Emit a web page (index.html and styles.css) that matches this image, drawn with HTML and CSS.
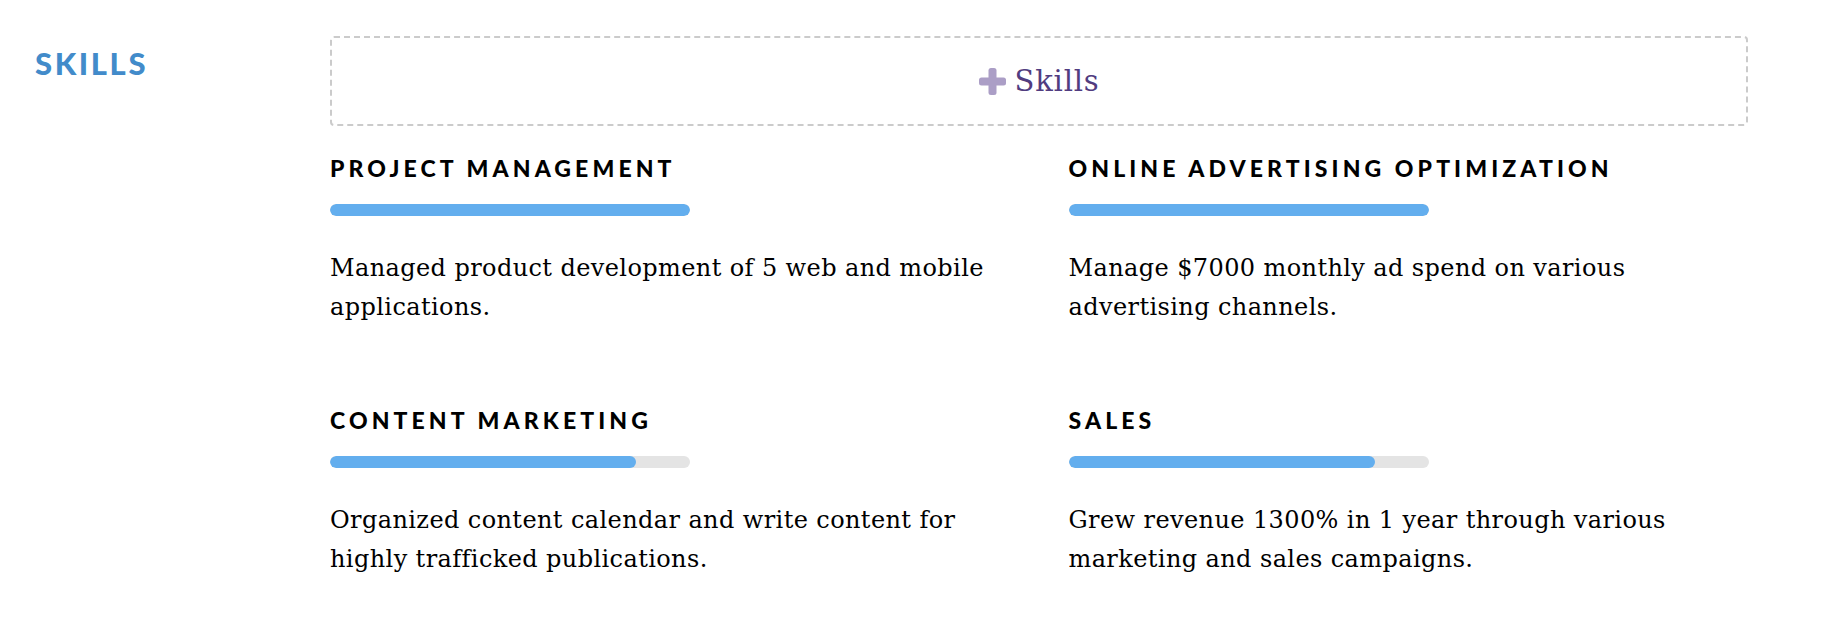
FILE: index.html
```html
<!DOCTYPE html>
<html lang="en">
<head>
<meta charset="utf-8">
<title>Skills</title>
<link rel="stylesheet" href="styles.css">
</head>
<body>
<div class="page">
  <aside class="side">
    <h2 class="section-title">SKILLS</h2>
  </aside>
  <main class="main">
    <button class="add-box" type="button">
      <svg class="plus" width="27" height="27" viewBox="0 0 27 27" aria-hidden="true">
        <rect x="9.5" y="0" width="8" height="27" rx="2.5" fill="#ab9ec6"/>
        <rect x="0" y="9.5" width="27" height="8" rx="2.5" fill="#ab9ec6"/>
      </svg>
      <span class="add-label">Skills</span>
    </button>
    <div class="skills">
      <section class="skill">
        <h3 class="skill-name">PROJECT MANAGEMENT</h3>
        <div class="bar"><div class="fill" style="width:100%"></div></div>
        <p class="skill-desc">Managed product development of 5 web and mobile applications.</p>
      </section>
      <section class="skill">
        <h3 class="skill-name">ONLINE ADVERTISING OPTIMIZATION</h3>
        <div class="bar"><div class="fill" style="width:100%"></div></div>
        <p class="skill-desc">Manage $7000 monthly ad spend on various advertising channels.</p>
      </section>
      <section class="skill">
        <h3 class="skill-name">CONTENT MARKETING</h3>
        <div class="bar"><div class="fill" style="width:85%"></div></div>
        <p class="skill-desc">Organized content calendar and write content for highly trafficked publications.</p>
      </section>
      <section class="skill">
        <h3 class="skill-name">SALES</h3>
        <div class="bar"><div class="fill" style="width:85%"></div></div>
        <p class="skill-desc">Grew revenue 1300% in 1 year through various marketing and sales campaigns.</p>
      </section>
    </div>
  </main>
</div>
</body>
</html>
```

FILE: styles.css
```css
* { box-sizing: border-box; }

html, body {
  margin: 0;
  padding: 0;
  background: #ffffff;
}

body {
  font-family: "DejaVu Serif", "Liberation Serif", serif;
  color: #111111;
}

.page {
  display: flex;
  padding: 36px 94px 0 35px;
}

.side {
  width: 295px;
  flex: none;
}

.section-title {
  margin: 0;
  padding-top: 7px;
  font-family: "Lato", "Liberation Sans", sans-serif;
  font-weight: 900;
  font-size: 31px;
  line-height: 40px;
  letter-spacing: 2.6px;
  color: #428bca;
}

.main {
  flex: 1;
  min-width: 0;
}

.add-box {
  display: flex;
  align-items: center;
  justify-content: center;
  gap: 9px;
  width: 100%;
  height: 90px;
  margin: 0;
  padding: 0;
  background: #ffffff;
  border: 2px dashed #cbcbcb;
  border-radius: 4px;
  font: inherit;
  cursor: pointer;
}

.plus {
  display: block;
  flex: none;
}

.add-label {
  font-family: "DejaVu Serif", "Liberation Serif", serif;
  font-size: 29px;
  line-height: 34px;
  letter-spacing: 0.8px;
  color: #513c80;
}

.skills {
  display: grid;
  grid-template-columns: 1fr 1fr;
  column-gap: 59px;
  row-gap: 81px;
  margin-top: 30px;
}

.skill-name {
  margin: 0;
  font-family: "Lato", "Liberation Sans", sans-serif;
  font-weight: 900;
  font-size: 23px;
  line-height: 24px;
  letter-spacing: 4.1px;
  color: #000000;
}

.bar {
  width: 360px;
  height: 12px;
  margin-top: 24px;
  border-radius: 6px;
  background: #e4e4e4;
  overflow: hidden;
}

.fill {
  height: 100%;
  border-radius: 6px;
  background: #63aeee;
}

.skill-desc {
  max-width: 665px;
  margin: 33px 0 0;
  font-size: 24px;
  line-height: 39px;
  letter-spacing: 0.4px;
  color: #000000;
}
```
